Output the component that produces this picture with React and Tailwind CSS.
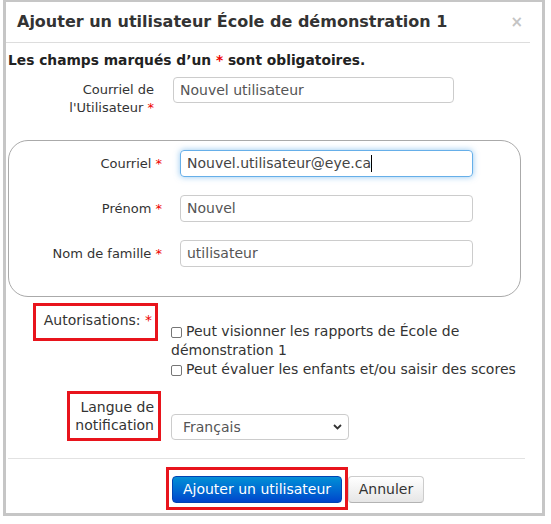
import React from 'react';

function Star() {
    return <span className="text-[#e00]">*</span>;
}

function Field({ children, focused }) {
    return (
        <div
            className={
                focused
                    ? 'w-[293px] h-[27px] rounded-[4px] border border-[#66afe9] shadow-[0_0_6px_rgba(102,175,233,0.7)] px-[6px] flex items-center text-[14px] text-[#444]'
                    : 'w-[293px] h-[27px] rounded-[4px] border border-[#ccc] px-[6px] flex items-center text-[14px] text-[#555]'
            }
        >
            {children}
        </div>
    );
}

function Checkbox() {
    return <span className="inline-block w-[11px] h-[11px] border border-[#767676] rounded-[2px] bg-white align-[-2px] mr-[4px]" />;
}

export default function App() {
    return (
        <div className="w-[551px] h-[524px] bg-white font-['DejaVu_Sans',sans-serif] text-[#333]">
            <div className="ml-[3px] w-[542px] h-[516px] border-x-[3px] border-t-2 border-b-[3px] border-[#c6c6c6] flex flex-col">
                {/* header */}
                <div className="h-[41px] mr-[12px] border-b border-[#ddd] flex items-center justify-between pl-[11px] pr-[7px]">
                    <h3 className="text-[16px] font-bold text-[#333] leading-none">Ajouter un utilisateur École de démonstration 1</h3>
                    <span className="text-[#c4c4c4] font-bold text-[15px] leading-none">×</span>
                </div>

                <div className="pl-[2px] pr-[18px]">
                    <p className="mt-[9px] text-[13.8px] font-bold text-[#222] leading-[16px]">
                        Les champs marqués d’un <Star /> sont obligatoires.
                    </p>

                    {/* user email */}
                    <div className="mt-[9px] flex items-start">
                        <div className="w-[152px] pr-[6px] pt-[4px] text-right text-[13px] leading-[18px]">
                            Courriel de<br />l'Utilisateur <Star />
                        </div>
                        <div className="ml-[13px] w-[281px] h-[26px] rounded-[4px] border border-[#ccc] px-[6px] flex items-center text-[14px] text-[#555]">
                            Nouvel utilisateur
                        </div>
                    </div>

                    {/* contact box */}
                    <div className="mt-[23px] w-[513px] rounded-[20px] border border-[#aaa] pt-[9px] pb-[29px] flex flex-col gap-[18px]">
                        <div className="flex items-center">
                            <div className="w-[153px] text-right text-[13px]">Courriel <Star /></div>
                            <div className="ml-[18px]">
                                <Field focused>
                                    Nouvel.utilisateur@eye.ca<span className="inline-block w-px h-[17px] bg-black" />
                                </Field>
                            </div>
                        </div>
                        <div className="flex items-center">
                            <div className="w-[153px] text-right text-[13px]">Prénom <Star /></div>
                            <div className="ml-[18px]">
                                <Field>Nouvel</Field>
                            </div>
                        </div>
                        <div className="flex items-center">
                            <div className="w-[153px] text-right text-[13px]">Nom de famille <Star /></div>
                            <div className="ml-[18px]">
                                <Field>utilisateur</Field>
                            </div>
                        </div>
                    </div>

                    {/* permissions */}
                    <div className="mt-[6px] flex items-start">
                        <div className="w-[150px] flex justify-end">
                            <div className="border-[3px] border-[#e8141c] pl-[8px] pr-[3px] pt-[5px] pb-[9px] text-[14px] leading-[18px]">
                                Autorisations: <Star />
                            </div>
                        </div>
                        <div className="ml-[13px] mt-[19px] text-[14px] leading-[19px] text-[#333]">
                            <div><Checkbox />Peut visionner les rapports de École de<br />démonstration 1</div>
                            <div><Checkbox />Peut évaluer les enfants et/ou saisir des scores</div>
                        </div>
                    </div>

                    {/* language */}
                    <div className="mt-[12px] flex items-end">
                        <div className="w-[153px] flex justify-end">
                            <div className="border-[3px] border-[#e8141c] pl-[5px] pr-[4px] py-[4px] text-right text-[14px] leading-[18px]">
                                Langue de<br />notification
                            </div>
                        </div>
                        <div className="ml-[10px] mb-[1px] w-[178px] h-[26px] rounded-[4px] border border-[#ccc] pl-[11px] pr-[6px] flex items-center justify-between text-[14px] text-[#555]">
                            Français
                            <svg width="9" height="6" viewBox="0 0 9 6" className="text-[#333]">
                                <path d="M1 1l3.5 3.5L8 1" fill="none" stroke="currentColor" strokeWidth="1.8" />
                            </svg>
                        </div>
                    </div>
                </div>

                {/* footer */}
                <div className="mt-[17px] ml-[2px] mr-[17px] border-t border-[#e2e2e2] pt-[8px] flex">
                    <div className="ml-[158px] border-[3px] border-[#e8141c] px-[3px] pt-[6px] pb-[4px]">
                        <button className="w-[170px] h-[27px] rounded-[4px] border border-[#0044b3] bg-gradient-to-b from-[#0a8fd6] to-[#0044cc] text-white text-[14px]">
                            Ajouter un utilisateur
                        </button>
                    </div>
                    <button className="mt-[9px] w-[76px] h-[27px] rounded-[4px] border border-[#ccc] border-b-[#b3b3b3] bg-gradient-to-b from-white to-[#e6e6e6] text-[#333] text-[14px]">
                        Annuler
                    </button>
                </div>
            </div>
        </div>
    );
}
